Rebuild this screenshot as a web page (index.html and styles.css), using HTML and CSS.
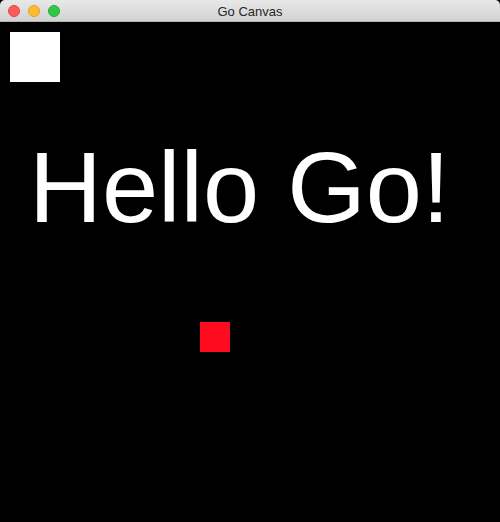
FILE: index.html
```html
<!DOCTYPE html>
<html>
<head>
<meta charset="utf-8">
<title>Go Canvas</title>
<link rel="stylesheet" href="styles.css">
</head>
<body>
<div class="window">
  <div class="titlebar">
    <div class="lights">
      <span class="light red"></span>
      <span class="light yellow"></span>
      <span class="light green"></span>
    </div>
    <div class="title">Go Canvas</div>
  </div>
  <div class="canvas">
    <div class="box white"></div>
    <div class="hello">Hello Go!</div>
    <div class="box red-box"></div>
  </div>
</div>
</body>
</html>
```
FILE: styles.css
```css
html, body {
  margin: 0;
  padding: 0;
  width: 500px;
  height: 522px;
  overflow: hidden;
  background: #000;
}
.window {
  width: 500px;
  height: 522px;
  display: flex;
  flex-direction: column;
}
.titlebar {
  height: 21px;
  border-bottom: 1px solid #b4b4b4;
  background: linear-gradient(#e9e8e9, #d3d2d3);
  border-radius: 5px 5px 0 0;
  position: relative;
  display: flex;
  align-items: center;
  justify-content: center;
}
.lights {
  position: absolute;
  left: 8px;
  top: 5px;
  display: flex;
  gap: 8px;
}
.light {
  width: 12px;
  height: 12px;
  border-radius: 50%;
  box-sizing: border-box;
}
.light.red { background: #fc5b57; border: 1px solid #e2463f; }
.light.yellow { background: #fdbc2e; border: 1px solid #e1a024; }
.light.green { background: #33c748; border: 1px solid #27aa35; }
.title {
  font-family: "Liberation Sans", Arial, sans-serif;
  font-size: 13px;
  color: #262626;
  line-height: 21px;
  margin-top: 1px;
}
.canvas {
  flex: 1;
  background: #000;
  position: relative;
}
.box {
  position: absolute;
}
.white {
  left: 10px;
  top: 10px;
  width: 50px;
  height: 50px;
  background: #fff;
}
.red-box {
  left: 200px;
  top: 300px;
  width: 30px;
  height: 30px;
  background: #ff0a1e;
}
.hello {
  position: absolute;
  left: 29px;
  top: 115px;
  font-family: "Liberation Sans", Arial, sans-serif;
  font-size: 101px;
  line-height: 100px;
  color: #fff;
  white-space: nowrap;
}
```
